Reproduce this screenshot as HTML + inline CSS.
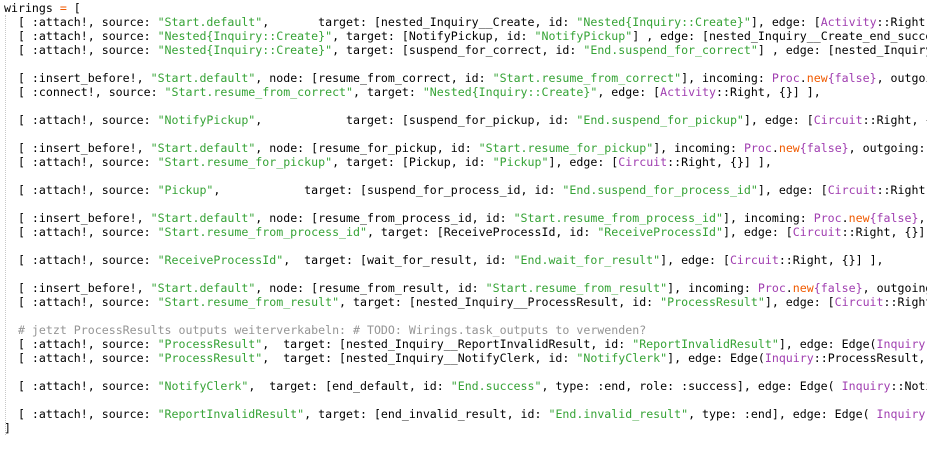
<!DOCTYPE html>
<html><head><meta charset="utf-8"><style>
html,body{margin:0;padding:0;background:#fff;width:927px;height:449px;overflow:hidden}
pre{margin:0;padding:1px 0 0 4px;font-family:"DejaVu Sans Mono","Liberation Mono",monospace;font-size:11.6px;line-height:14px;color:#000;white-space:pre;position:relative}
.s{color:#36a336}.c{color:#959595}.p{color:#a03eb0}.o{color:#f05a00}
.g{position:absolute;left:5px;top:15px;height:420px;border-left:1px dotted #c8c8c8}
</style></head><body>
<div class="g"></div>
<pre>wirings <span class="o">=</span> [
  [ :attach!, source: <span class="s">"Start.default"</span>,       target: [nested_Inquiry__Create, id: <span class="s">"Nested{Inquiry::Create}"</span>], edge: [<span class="p">Activity</span>::Right, {}] ],
  [ :attach!, source: <span class="s">"Nested{Inquiry::Create}"</span>, target: [NotifyPickup, id: <span class="s">"NotifyPickup"</span>] , edge: [nested_Inquiry__Create_end_success, {}] ],
  [ :attach!, source: <span class="s">"Nested{Inquiry::Create}"</span>, target: [suspend_for_correct, id: <span class="s">"End.suspend_for_correct"</span>] , edge: [nested_Inquiry__Create_end_failure, {}] ],

  [ :insert_before!, <span class="s">"Start.default"</span>, node: [resume_from_correct, id: <span class="s">"Start.resume_from_correct"</span>], incoming: <span class="p">Proc</span>.<span class="o">new</span><span class="p">{false}</span>, outgoing: [<span class="p">Circuit</span>::Right] ],
  [ :connect!, source: <span class="s">"Start.resume_from_correct"</span>, target: <span class="s">"Nested{Inquiry::Create}"</span>, edge: [<span class="p">Activity</span>::Right, {}] ],

  [ :attach!, source: <span class="s">"NotifyPickup"</span>,            target: [suspend_for_pickup, id: <span class="s">"End.suspend_for_pickup"</span>], edge: [<span class="p">Circuit</span>::Right, {}] ],

  [ :insert_before!, <span class="s">"Start.default"</span>, node: [resume_for_pickup, id: <span class="s">"Start.resume_for_pickup"</span>], incoming: <span class="p">Proc</span>.<span class="o">new</span><span class="p">{false}</span>, outgoing: [<span class="p">Circuit</span>::Right] ],
  [ :attach!, source: <span class="s">"Start.resume_for_pickup"</span>, target: [Pickup, id: <span class="s">"Pickup"</span>], edge: [<span class="p">Circuit</span>::Right, {}] ],

  [ :attach!, source: <span class="s">"Pickup"</span>,            target: [suspend_for_process_id, id: <span class="s">"End.suspend_for_process_id"</span>], edge: [<span class="p">Circuit</span>::Right, {}] ],

  [ :insert_before!, <span class="s">"Start.default"</span>, node: [resume_from_process_id, id: <span class="s">"Start.resume_from_process_id"</span>], incoming: <span class="p">Proc</span>.<span class="o">new</span><span class="p">{false}</span>, outgoing: [<span class="p">Circuit</span>::Right] ],
  [ :attach!, source: <span class="s">"Start.resume_from_process_id"</span>, target: [ReceiveProcessId, id: <span class="s">"ReceiveProcessId"</span>], edge: [<span class="p">Circuit</span>::Right, {}] ],

  [ :attach!, source: <span class="s">"ReceiveProcessId"</span>,  target: [wait_for_result, id: <span class="s">"End.wait_for_result"</span>], edge: [<span class="p">Circuit</span>::Right, {}] ],

  [ :insert_before!, <span class="s">"Start.default"</span>, node: [resume_from_result, id: <span class="s">"Start.resume_from_result"</span>], incoming: <span class="p">Proc</span>.<span class="o">new</span><span class="p">{false}</span>, outgoing: [<span class="p">Circuit</span>::Right] ],
  [ :attach!, source: <span class="s">"Start.resume_from_result"</span>, target: [nested_Inquiry__ProcessResult, id: <span class="s">"ProcessResult"</span>], edge: [<span class="p">Circuit</span>::Right, {}] ],

  <span class="c"># jetzt ProcessResults outputs weiterverkabeln: # TODO: Wirings.task_outputs to verwenden?</span>
  [ :attach!, source: <span class="s">"ProcessResult"</span>,  target: [nested_Inquiry__ReportInvalidResult, id: <span class="s">"ReportInvalidResult"</span>], edge: Edge(<span class="p">Inquiry</span>::ProcessResult, :invalid) ],
  [ :attach!, source: <span class="s">"ProcessResult"</span>,  target: [nested_Inquiry__NotifyClerk, id: <span class="s">"NotifyClerk"</span>], edge: Edge(<span class="p">Inquiry</span>::ProcessResult, :valid) ],

  [ :attach!, source: <span class="s">"NotifyClerk"</span>,  target: [end_default, id: <span class="s">"End.success"</span>, type: :end, role: :success], edge: Edge( <span class="p">Inquiry</span>::NotifyClerk) ],

  [ :attach!, source: <span class="s">"ReportInvalidResult"</span>, target: [end_invalid_result, id: <span class="s">"End.invalid_result"</span>, type: :end], edge: Edge( <span class="p">Inquiry</span>::ReportInvalidResult) ],
]</pre>
</body></html>
